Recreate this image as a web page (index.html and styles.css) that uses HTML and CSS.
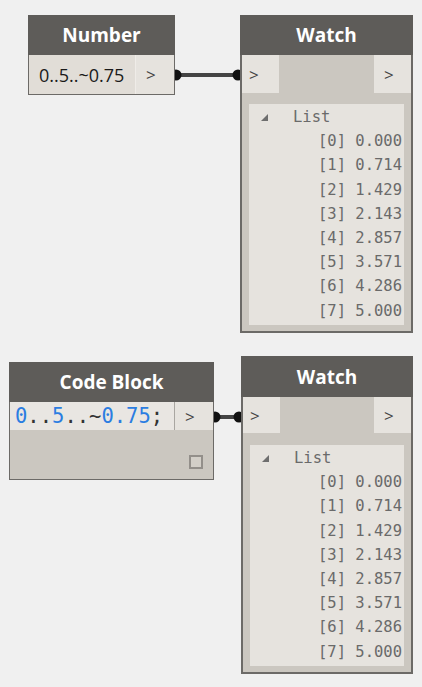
FILE: index.html
```html
<!DOCTYPE html>
<html>
<head>
  <title>graph</title>
  <meta charset="UTF-8">
  <meta name="viewport" content="width=device-width, initial-scale=1.0">
  <link rel="stylesheet" href="styles.css">
</head>
<body>
  <div class="canvas">
    <svg class="wires" width="422" height="687" viewBox="0 0 422 687">
      <line x1="174" y1="75" x2="240" y2="75" />
      <circle cx="176" cy="75" r="5.5" />
      <circle cx="238" cy="75" r="5.5" />
      <line x1="213" y1="417" x2="241" y2="417" />
      <circle cx="215" cy="417" r="5.5" />
      <circle cx="239" cy="417" r="5.5" />
    </svg>

    <div class="node number-node">
      <div class="node-header">Number</div>
      <div class="node-row">
        <div class="number-field">0..5..~0.75</div>
        <div class="port">&gt;</div>
      </div>
    </div>

    <div class="node watch watch-a">
      <div class="node-header">Watch</div>
      <div class="watch-ports">
        <div class="port port-in">&gt;</div>
        <div class="port port-out">&gt;</div>
      </div>
      <div class="watch-list">
        <div class="list-title"><span class="tri"></span>List</div>
        <div class="list-item">[0] 0.000</div>
        <div class="list-item">[1] 0.714</div>
        <div class="list-item">[2] 1.429</div>
        <div class="list-item">[3] 2.143</div>
        <div class="list-item">[4] 2.857</div>
        <div class="list-item">[5] 3.571</div>
        <div class="list-item">[6] 4.286</div>
        <div class="list-item">[7] 5.000</div>
      </div>
    </div>

    <div class="node code-node">
      <div class="node-header">Code Block</div>
      <div class="code-row">
        <div class="code-field"><span class="num">0</span>..<span class="num">5</span>..~<span class="num">0.75</span>;</div>
        <div class="port">&gt;</div>
      </div>
      <div class="code-body">
        <span class="check"></span>
      </div>
    </div>

    <div class="node watch watch-b">
      <div class="node-header">Watch</div>
      <div class="watch-ports">
        <div class="port port-in">&gt;</div>
        <div class="port port-out">&gt;</div>
      </div>
      <div class="watch-list">
        <div class="list-title"><span class="tri"></span>List</div>
        <div class="list-item">[0] 0.000</div>
        <div class="list-item">[1] 0.714</div>
        <div class="list-item">[2] 1.429</div>
        <div class="list-item">[3] 2.143</div>
        <div class="list-item">[4] 2.857</div>
        <div class="list-item">[5] 3.571</div>
        <div class="list-item">[6] 4.286</div>
        <div class="list-item">[7] 5.000</div>
      </div>
    </div>
  </div>
</body>
</html>
```

FILE: styles.css
```css
/* Reset styles */
* {
  margin: 0;
  padding: 0;
  box-sizing: border-box;
}

body {
  background-color: #f0f0f0;
  font-family: 'Open Sans', sans-serif;
  color: #333;
}

/* Canvas */
.canvas {
  position: relative;
  width: 422px;
  height: 687px;
  overflow: hidden;
}

.wires {
  position: absolute;
  left: 0;
  top: 0;
}

.wires line {
  stroke: #444;
  stroke-width: 4;
}

.wires circle {
  fill: #111;
}

/* Nodes */
.node {
  position: absolute;
  display: flex;
  flex-direction: column;
  background-color: #cbc7c0;
  border: 1px solid #6c6a67;
  border-top: none;
}

.node-header {
  height: 40px;
  margin: 0 -1px;
  display: flex;
  align-items: center;
  justify-content: center;
  background-color: #5e5c59;
  color: #fff;
  font-size: 19px;
  font-weight: 700;
}

.port {
  width: 38px;
  padding-left: 10px;
  display: flex;
  align-items: center;
  background-color: #e6e3de;
  color: #444;
  font-size: 17px;
}

/* Number node */
.number-node {
  left: 28px;
  top: 15px;
  width: 147px;
  height: 80px;
}

.node-row {
  flex: 1;
  display: flex;
}

.number-field {
  flex: 1;
  display: flex;
  align-items: center;
  padding-left: 10px;
  background-color: #e1ddd7;
  border-right: 1px solid #efece8;
  color: #1a1a1a;
  font-size: 18px;
}

/* Watch nodes */
.watch {
  border-width: 0 2px 2px 2px;
}

.watch .node-header {
  margin: 0 -2px;
}

.watch-a {
  left: 240px;
  top: 15px;
  width: 173px;
  height: 318px;
}

.watch-b {
  left: 241px;
  top: 356px;
  width: 172px;
  height: 318px;
}

.watch-b .node-header {
  height: 41px;
}

.watch-ports {
  height: 38px;
  display: flex;
  justify-content: space-between;
}

.watch-b .watch-ports {
  height: 36px;
}

.watch .port {
  width: 37px;
}

.watch .port-in {
  padding-left: 7px;
}

.watch-list {
  flex: 1;
  margin: 11px 7px 6px 7px;
  padding-top: 1px;
  background-color: #e6e3de;
  font-family: 'DejaVu Sans Mono', monospace;
  font-size: 15.5px;
  line-height: 24.2px;
  color: #6a6a6a;
}

.watch-b .watch-list {
  margin-top: 12px;
}

.list-title {
  display: flex;
  align-items: center;
  padding-left: 12px;
}

.tri {
  width: 0;
  height: 0;
  margin-right: 25px;
  border-left: 7px solid transparent;
  border-bottom: 7px solid #6e6e6e;
}

.list-item {
  text-align: right;
  padding-right: 2px;
}

/* Code block */
.code-node {
  left: 9px;
  top: 362px;
  width: 205px;
  height: 118px;
}

.code-row {
  height: 28px;
  display: flex;
}

.code-field {
  flex: 1;
  display: flex;
  align-items: center;
  padding-left: 5px;
  background-color: #e9e6e2;
  border-right: 1px solid #a9a6a1;
  font-family: 'DejaVu Sans Mono', monospace;
  font-size: 20.5px;
  color: #333;
}

.code-field .num {
  color: #2b7de1;
}

.code-body {
  flex: 1;
  display: flex;
  align-items: flex-end;
  justify-content: flex-end;
  padding: 0 10px 10px 0;
}

.check {
  width: 14px;
  height: 14px;
  border: 2px solid #938f8a;
  background-color: #d3cfc8;
}
```
